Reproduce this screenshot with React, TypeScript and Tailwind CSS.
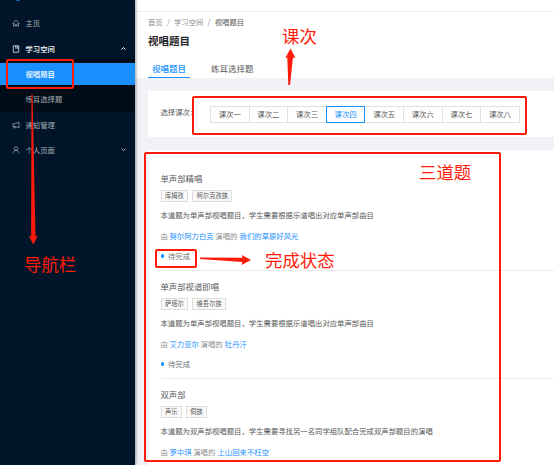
import type { ReactNode } from "react";

const lessons = ["课次一", "课次二", "课次三", "课次四", "课次五", "课次六", "课次七", "课次八"];

const questions = [
  {
    title: "单声部精唱",
    tags: ["库姆孜", "柯尔克孜族"],
    text: "本道题为单声部视唱题目，学生需要根据乐谱唱出对应单声部曲目",
    singer: "努尔阿力白克",
    song: "我们的草原好风光",
    status: "待完成",
  },
  {
    title: "单声部视谱即唱",
    tags: ["萨塔尔", "维吾尔族"],
    text: "本道题为单声部视唱题目，学生需要根据乐谱唱出对应单声部曲目",
    singer: "艾力亚尔",
    song: "牡丹汗",
    status: "待完成",
  },
  {
    title: "双声部",
    tags: ["声乐", "侗族"],
    text: "本道题为双声部视唱题目，学生需要寻找另一名同学组队配合完成双声部题目的演唱",
    singer: "罗中琪",
    song: "上山回来不枉空",
    status: "",
  },
];

function Icon({ children }: { children: ReactNode }) {
  return (
    <svg viewBox="0 0 16 16" className="h-[8px] w-[8px] shrink-0" fill="none" stroke="currentColor" strokeWidth="1.4">
      {children}
    </svg>
  );
}

function Chevron({ up }: { up?: boolean }) {
  return (
    <svg viewBox="0 0 10 6" className="ml-auto h-[3px] w-[5px]" fill="none" stroke="currentColor" strokeWidth="2">
      <path d={up ? "M1 5l4-4 4 4" : "M1 1l4 4 4-4"} />
    </svg>
  );
}

function Sidebar() {
  const row = "flex h-[21px] items-center gap-[5.5px] pl-[12px] pr-[9.5px]";
  return (
    <aside className="z-10 flex w-[135px] shrink-0 flex-col bg-[#001529] text-[7.36px] text-[#a6adb4] shadow-[1px_0_3px_rgba(0,21,41,0.4)]">
      <div className="ml-[16px] h-px w-[4px] rounded-b bg-[#1268b3]" />
      <div className={`${row} mt-[11px]`}>
        <Icon>
          <path d="M1 9l7-7 7 7M3 8v6h10V8M6.500 14v-4h3v4" />
        </Icon>
        <span>主页</span>
      </div>
      <div className={`${row} mt-[5px] text-white`}>
        <Icon>
          <path d="M2.500 1.500h11v13h-11zM7.500 2v5l2-1.500 2 1.500V2" />
        </Icon>
        <span className="font-medium">学习空间</span>
        <Chevron up />
      </div>
      <div className="flex h-[53px] flex-col gap-[3px] bg-[#000c17] pt-[4px]">
        <div className="flex h-[22px] items-center bg-[#1890ff] pl-[25.5px] font-medium text-white">视唱题目</div>
        <div className="flex h-[21px] items-center pl-[25.5px]">练耳选择题</div>
      </div>
      <div className={`${row} mt-[2px]`}>
        <Icon>
          <path d="M14 2v12L7 11H2V5.500h5zM3.500 11v3h3v-3" />
        </Icon>
        <span>通知管理</span>
      </div>
      <div className={`${row} mt-[4px]`}>
        <Icon>
          <circle cx="8" cy="5" r="3.500" />
          <path d="M2 15c0-4 2.500-6 6-6s6 2 6 6" />
        </Icon>
        <span>个人页面</span>
        <Chevron />
      </div>
    </aside>
  );
}

function Question({ item }: { item: (typeof questions)[number] }) {
  return (
    <article className="mb-[8px] h-[100.2px] border-b border-[#ebebeb] text-[7.36px] text-[#595959] last:border-b-0">
      <h3 className="h-[14px] text-[8.4px] leading-[14px]">{item.title}</h3>
      <div className="mt-[5px] flex gap-[4px]">
        {item.tags.map((tag) => (
          <span key={tag} className="flex h-[12px] items-center border border-[#dcdcdc] bg-[#fafafa] px-[3.4px] text-[6.3px]">
            {tag}
          </span>
        ))}
      </div>
      <p className="mt-[7.500px] h-[12px] leading-[12px]">{item.text}</p>
      <p className="mt-[8.500px] h-[12px] leading-[12px] text-[#8c8c8c]">
        由 <span className="text-[#1890ff]">{item.singer}</span> 演唱的{" "}
        <span className="ml-[0.500px] text-[#1890ff]">{item.song}</span>
      </p>
      {item.status && (
        <p className="mt-[8px] flex h-[12px] items-center gap-[4px] leading-[12px] text-[#737373]">
          <i className="mt-px h-[3.500px] w-[3.500px] rounded-full bg-[#1890ff]" />
          {item.status}
        </p>
      )}
    </article>
  );
}

function Annotations() {
  const box = "absolute rounded-[2px] border-2 border-[#ff1b0a]";
  const label = "absolute whitespace-nowrap text-[17.4px] leading-[24px] text-[#ff1b0a]";
  return (
    <div className="pointer-events-none absolute inset-0 z-20">
      <div className={`${box} left-[6px] top-[59px] h-[30px] w-[68px]`} />
      <div className={`${box} left-[192px] top-[96px] h-[39px] w-[335px]`} />
      <div className={`${box} left-[144px] top-[152px] h-[310px] w-[357px]`} />
      <div className={`${box} left-[155px] top-[249px] h-[19px] w-[42px]`} />
      <svg className="absolute inset-0" width="554" height="465" fill="#ff1b0a">
        <path d="M31.500 94h1l3 142.500 2.500-1-4.700 9-4.700-9 2.500 1z" />
        <path d="M288.300 85l-1-27.500-2 .5 5.200-9.500 5 9.500-2.500-.5-3 27.500z" />
        <path d="M200 257.600l42.500.2-.7-2.800 9.200 5-9.500 5 .8-3.100-42.300-2.900z" />
      </svg>
      <span className={`${label} left-[24px] top-[252px]`}>导航栏</span>
      <span className={`${label} left-[282px] top-[24px]`}>课次</span>
      <span className={`${label} left-[419px] top-[160px]`}>三道题</span>
      <span className={`${label} left-[265px] top-[248px]`}>完成状态</span>
    </div>
  );
}

export default function App() {
  return (
    <div className="relative flex h-[465px] w-[554px] overflow-hidden bg-[#f0f2f5] font-['Noto_Sans_CJK_SC',sans-serif]">
      <Sidebar />
      <main className="flex min-w-0 flex-1 flex-col">
        <header className="h-[78px] shrink-0 bg-white">
          <div className="h-[12px] border-b border-[#eeeff1]" />
          <div className="pl-[13px]">
            <nav className="mt-[4px] flex h-[12px] items-center gap-[4.200px] text-[7.36px] text-[#8c8c8c]">
              <span>首页</span>
              <span>/</span>
              <span>学习空间</span>
              <span>/</span>
              <span className="text-[#595959]">视唱题目</span>
            </nav>
            <h1 className="mt-[4px] h-[17px] text-[10.5px] font-bold leading-[17px] text-[#262626]">视唱题目</h1>
            <div className="mt-[9px] flex h-[20px] gap-[17px] text-[8.5px] leading-[20px] text-[#595959]">
              <span className="border-b border-[#1890ff] px-[4px] font-medium text-[#1890ff]">视唱题目</span>
              <span className="px-[4px]">练耳选择题</span>
            </div>
          </div>
        </header>
        <section className="ml-[13px] mt-[13px] flex h-[46px] shrink-0 items-center bg-white pl-[12.500px] text-[7.36px] text-[#595959]">
          <span className="w-[50.500px] pb-[4px]">选择课次：</span>
          <div className="flex h-[17px]">
            {lessons.map((lesson) => (
              <span
                key={lesson}
                className={
                  lesson === "课次四"
                    ? "z-[1] -ml-px flex w-[39.600px] items-center justify-center border border-[#1890ff] text-[#1890ff]"
                    : "-ml-px flex w-[39.600px] items-center justify-center border border-[#e0e0e0]"
                }
              >
                {lesson}
              </span>
            ))}
          </div>
        </section>
        <section className="ml-[13px] mt-[13px] min-h-0 flex-1 overflow-hidden bg-white pl-[12.500px] pt-[20.500px]">
          {questions.map((item) => (
            <Question key={item.title} item={item} />
          ))}
        </section>
      </main>
      <Annotations />
    </div>
  );
}
